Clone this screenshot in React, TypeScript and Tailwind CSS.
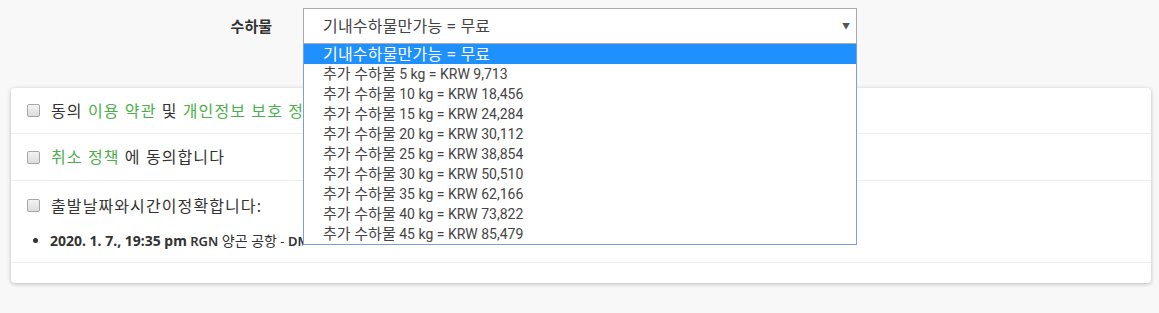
import React from "react"

const font = { fontFamily: '"Noto Sans", "Noto Sans CJK KR", sans-serif' }
const latin = { fontFamily: 'Roboto, "Noto Sans CJK KR", sans-serif' }

const extras = [
  ["5 kg", "9,713"],
  ["10 kg", "18,456"],
  ["15 kg", "24,284"],
  ["20 kg", "30,112"],
  ["25 kg", "38,854"],
  ["30 kg", "50,510"],
  ["35 kg", "62,166"],
  ["40 kg", "73,822"],
  ["45 kg", "85,479"],
]

function Checkbox() {
  return (
    <span className="inline-block w-[13px] h-[13px] rounded-[2px] border border-[#a6a6a6] bg-gradient-to-b from-[#f4f4f4] to-[#dcdcdc] shrink-0" />
  )
}

export default function App() {
  return (
    <div className="w-[1159px] h-[313px] bg-[#f8f8f8] text-[#333] text-[16px] overflow-hidden" style={font}>
      {/* baggage select */}
      <div className="flex items-center h-[36px] mt-[8px]">
        <label className="w-[272px] text-right font-bold text-[15px] text-[#333]">수하물</label>
        <div className="relative ml-[31px] w-[554px]">
          <div className="h-[36px] bg-white border border-[#aaa] flex items-center justify-between pl-[19px] pr-[6px]">
            <span className="text-[16px] text-[#444] tracking-[0.2px]">기내수하물만가능 = 무료</span>
            <span className="text-[8px] text-[#555] leading-none">▼</span>
          </div>
          <ul className="absolute left-0 top-[36px] w-full bg-white border border-t-0 border-[#7f9ddb] z-10">
            <li className="h-[20px] leading-[20px] pl-[19px] text-[16px] tracking-[0.2px] whitespace-nowrap bg-[#1e90ff] text-white">
              기내수하물만가능 = 무료
            </li>
            {extras.map(([kg, price]) => (
              <li key={kg} className="h-[20px] leading-[20px] pl-[19px] text-[14px] whitespace-nowrap text-[#444]" style={latin}>
                <span className="text-[15px]">추가 수하물</span> {kg} = KRW {price}
              </li>
            ))}
          </ul>
        </div>
      </div>

      {/* agreements card */}
      <div className="mx-[11px] mt-[44px] w-[1140px] bg-white rounded-[4px] shadow-[0_1px_4px_rgba(0,0,0,0.25)]">
        <div className="h-[46px] flex items-center gap-[11px] px-[16px] border-b border-[#eee] tracking-[1.1px]">
          <Checkbox />
          <span className="whitespace-nowrap">
            동의 <span className="text-[#4cae4c]">이용 약관</span> 및 <span className="text-[#4cae4c]">개인정보 보호 정책</span>
          </span>
        </div>
        <div className="h-[47px] flex items-center gap-[11px] px-[16px] border-b border-[#eee] tracking-[1.1px]">
          <Checkbox />
          <span>
            <span className="text-[#4cae4c]">취소 정책</span> 에 동의합니다
          </span>
        </div>
        <div className="h-[82px] px-[16px] pt-[16px] border-b border-[#eee]">
          <div className="flex items-center gap-[11px] h-[17px] tracking-[1.1px]">
            <Checkbox />
            <span>출발날짜와시간이정확합니다:</span>
          </div>
          <ul className="mt-[16px] pl-[6px] w-[276px] overflow-hidden text-[13px]">
            <li className="flex items-center gap-[12px] whitespace-nowrap">
              <span className="w-[5px] h-[5px] rounded-full bg-[#333] shrink-0" />
              <span>
                <b className="text-[14px]">2020. 1. 7., 19:35 pm</b> <span className="font-semibold">RGN</span> <span className="text-[14px]">양곤 공항</span> - <span className="font-semibold">DMK</span> 돈므앙 공항
              </span>
            </li>
          </ul>
        </div>
        <div className="h-[20px]" />
      </div>
    </div>
  )
}
